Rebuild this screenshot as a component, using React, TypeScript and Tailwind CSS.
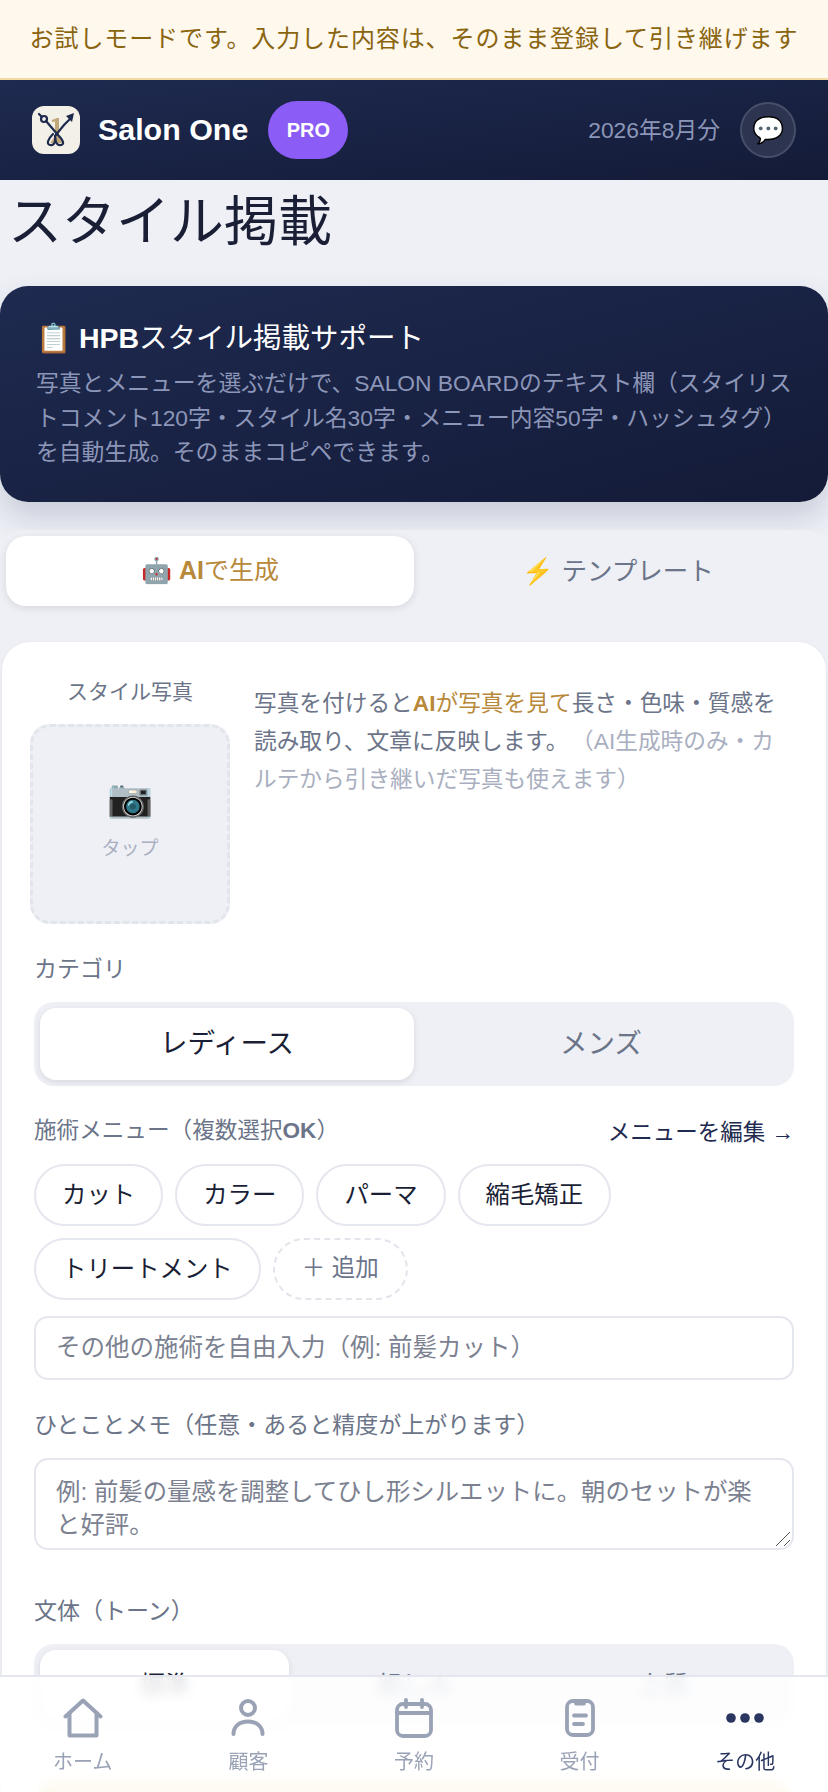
import React from 'react';

const font = { fontFamily: '"Liberation Sans", "Noto Sans CJK JP", sans-serif' };

function Logo() {
  return (
    <div className="w-[48px] h-[48px] rounded-[12px] bg-[#f3f1e7] flex items-center justify-center shrink-0">
      <svg width="40" height="40" viewBox="0 0 40 40" fill="none">
        <path d="M21 8 L16 10 L16 12 L19 11.5 L19 26 L14 33 L27 33 L23 26 L23 8 Z" fill="#c2a878" />
        <g stroke="#1e2b4f" strokeWidth="2.2" fill="none" strokeLinecap="round">
          <circle cx="8" cy="9" r="3" />
          <path d="M3 4 L6 7" />
          <path d="M10 11 L22 25" />
          <path d="M22 25 C27 30 29 34 25 35 C20 36 19 30 19 26 L28 15 L36 7" />
          <path d="M17 24 C12 29 10 34 14 35 C19 36 20 30 19 26" />
        </g>
        <path d="M30 6 L38 3 L36 12 Z" fill="#1e2b4f" />
      </svg>
    </div>
  );
}

function Chip({ label, dashed }: { label: string; dashed?: boolean }) {
  if (dashed) {
    return (
      <div className="h-[62px] px-[27px] rounded-full border-2 border-dashed border-[#e3e5ec] flex items-center text-[23.5px] text-[#6b7488]">
        {label}
      </div>
    );
  }
  return (
    <div className="h-[62px] px-[26px] rounded-full border-2 border-[#e5e7ee] flex items-center text-[24.4px] text-[#1a1f36]">
      {label}
    </div>
  );
}

function NavItem({ label, active, children }: { label: string; active?: boolean; children: React.ReactNode }) {
  return (
    <div className="flex flex-col items-center">
      <div className="h-[46px] flex items-center justify-center">{children}</div>
      <div className={active ? 'mt-[6px] text-[20px] text-[#2a3560]' : 'mt-[6px] text-[20px] text-[#9aa2b6]'}>{label}</div>
    </div>
  );
}

export default function App() {
  return (
    <div className="relative w-[828px] h-[1792px] overflow-hidden bg-[#eef0f6]" style={font}>
      <div className="h-[80px] bg-[#fff8ed] border-b-2 border-[#f3d9a4] flex items-center justify-center text-[24px] tracking-[0.9px] text-[#8a6510]">
        お試しモードです。入力した内容は、そのまま登録して引き継げます
      </div>

      <header className="h-[100px] bg-gradient-to-br from-[#1e2a50] to-[#141b38] pl-[32px] pr-[32px] flex items-center justify-between">
        <div className="flex items-center">
          <Logo />
          <div className="ml-[18px] text-[30.4px] font-bold text-white">Salon One</div>
          <div className="ml-[20px] w-[80px] h-[58px] rounded-full bg-[#8b5cf6] flex items-center justify-center text-[20px] font-bold text-white">
            PRO
          </div>
        </div>
        <div className="flex items-center">
          <div className="text-[22.8px] text-[#8c96b8]">2026年8月分</div>
          <div className="ml-[20px] w-[56px] h-[56px] rounded-full bg-[#2d3450] border-2 border-[#474e69] flex items-center justify-center text-[26px]">
            💬
          </div>
        </div>
      </header>

      <h1 className="pl-[8px] pt-[4px] h-[106px] text-[54px] leading-[76px] text-[#1a1f36]">スタイル掲載</h1>

      <section className="h-[216px] rounded-[28px] bg-gradient-to-br from-[#1e2a50] to-[#141b38] shadow-[0_16px_32px_rgba(30,42,80,0.18)] pl-[36px] pr-[28px] pt-[32px]">
        <div className="text-[28.5px] leading-[40px] text-white">
          📋 <b>HPB</b>スタイル掲載サポート
        </div>
        <p className="mt-[8px] text-[22.8px] leading-[34.5px] text-[#8c96b8]">
          写真とメニューを選ぶだけで、SALON BOARDのテキスト欄（スタイリストコメント120字・スタイル名30字・メニュー内容50字・ハッシュタグ）を自動生成。そのままコピペできます。
        </p>
      </section>

      <div className="mt-[28px] h-[100px] rounded-t-[24px] bg-[#eef0f5] p-[6px] grid grid-cols-2 items-start">
        <div className="h-[70px] rounded-[20px] bg-white shadow-[0_2px_8px_rgba(0,0,0,0.1)] flex items-center justify-center text-[25px] text-[#b8893a]">
          🤖&nbsp;<b>AI</b>で生成
        </div>
        <div className="h-[70px] flex items-center justify-center text-[25.5px] text-[#6b7488]">⚡ テンプレート</div>
      </div>

      <main className="mt-[12px] mx-[2px] rounded-[28px] bg-white shadow-[0_1px_4px_rgba(0,0,0,0.06)] px-[32px] pt-[32px]">
        <div className="flex">
          <div className="w-[200px] -ml-[4px] shrink-0">
            <div className="pt-[2px] h-[32px] text-center text-[21px] leading-[32px] text-[#6b7488]">スタイル写真</div>
            <div className="mt-[18px] h-[200px] pb-[10px] rounded-[20px] bg-[#eef0f5] border-[3px] border-dashed border-[#e3e5ec] flex flex-col items-center justify-center">
              <div className="text-[37px] leading-[48px]">📷</div>
              <div className="mt-[12px] text-[19px] text-[#a9afc0]">タップ</div>
            </div>
          </div>
          <p className="ml-[24px] mt-[10px] w-[526px] text-[22.7px] leading-[38px] text-[#6b7488]">
            写真を付けると<span className="text-[#b8893a]"><b>AI</b>が写真を見て</span>長さ・色味・質感を読み取り、文章に反映します。<span className="ml-[14px] text-[#a9afc0]">（AI生成時のみ・カルテから引き継いだ写真も使えます）</span>
          </p>
        </div>

        <div className="mt-[28px] text-[23px] leading-[34px] text-[#6b7488]">カテゴリ</div>
        <div className="mt-[16px] h-[84px] rounded-[20px] bg-[#eef0f5] p-[6px] grid grid-cols-2">
          <div className="rounded-[16px] bg-white shadow-[0_2px_6px_rgba(0,0,0,0.1)] flex items-center justify-center text-[27.5px] text-[#1a1f36]">
            レディース
          </div>
          <div className="flex items-center justify-center text-[27.5px] text-[#6b7488]">メンズ</div>
        </div>

        <div className="mt-[28px] flex items-start justify-between">
          <div className="text-[22.6px] leading-[34px] text-[#6b7488]">
            施術メニュー（複数選択<b>OK</b>）
          </div>
          <div className="pt-[2px] h-[34px] text-[22.5px] leading-[34px] text-[#1e2a50]">メニューを編集 →</div>
        </div>
        <div className="mt-[16px] flex flex-wrap gap-[12px] w-[700px]">
          <Chip label="カット" />
          <Chip label="カラー" />
          <Chip label="パーマ" />
          <Chip label="縮毛矯正" />
          <Chip label="トリートメント" />
          <Chip label="＋ 追加" dashed />
        </div>

        <div className="mt-[16px] h-[64px] rounded-[14px] border-2 border-[#e5e7ee] px-[20px] flex items-center text-[24.5px] text-[#7b8190]">
          その他の施術を自由入力（例: 前髪カット）
        </div>

        <div className="mt-[28px] text-[23px] leading-[34px] text-[#6b7488]">ひとことメモ（任意・あると精度が上がります）</div>
        <div className="relative mt-[16px] h-[92px] rounded-[14px] border-2 border-[#e5e7ee] px-[20px] pt-[15px] text-[24.4px] leading-[33px] text-[#7b8190]">
          例: 前髪の量感を調整してひし形シルエットに。朝のセットが楽と好評。
          <svg className="absolute right-[1px] bottom-[1px]" width="16" height="16" viewBox="0 0 16 16" stroke="#555" strokeWidth="1">
            <path d="M1 15 L15 1 M9 15 L15 9" />
          </svg>
        </div>

        <div className="mt-[44px] text-[23px] leading-[34px] text-[#6b7488]">文体（トーン）</div>
        <div className="mt-[16px] h-[84px] rounded-[20px] bg-[#eef0f5] p-[6px] grid grid-cols-3">
          <div className="rounded-[16px] bg-white shadow-[0_2px_6px_rgba(0,0,0,0.1)] flex items-center justify-center text-[25px] text-[#1a1f36]">
            標準
          </div>
          <div className="flex items-center justify-center text-[25px] text-[#6b7488]">親しみ</div>
          <div className="flex items-center justify-center text-[25px] text-[#6b7488]">上質</div>
        </div>

        <div className="mt-[52px] h-[80px] rounded-[24px] bg-[#f6dfa6]" />
      </main>

      <nav className="absolute left-0 right-0 bottom-0 h-[117px] bg-white/85 backdrop-blur-[6px] border-t-2 border-[#e5e7ee] grid grid-cols-5 pt-[18px]">
        <NavItem label="ホーム">
          <svg width="40" height="40" viewBox="0 0 40 40" fill="none" stroke="#9aa2b6" strokeWidth="4" strokeLinejoin="round" strokeLinecap="round">
            <path d="M2.5 18.5 L20 2.5 L37.5 18.5" />
            <path d="M6.5 15 V37.5 H33.5 V15" />
          </svg>
        </NavItem>
        <NavItem label="顧客">
          <svg width="34" height="38" viewBox="0 0 34 38" fill="none" stroke="#9aa2b6" strokeWidth="4" strokeLinecap="round">
            <circle cx="17" cy="9" r="7" />
            <path d="M2.5 35 C2.5 27 9 22.5 17 22.5 C25 22.5 31.5 27 31.5 35" />
          </svg>
        </NavItem>
        <NavItem label="予約">
          <svg width="38" height="40" viewBox="0 0 38 40" fill="none" stroke="#9aa2b6" strokeWidth="3.8" strokeLinecap="round">
            <rect x="2" y="6" width="34" height="32" rx="6" />
            <path d="M2 15 H36 M11 2 V9 M27 2 V9" />
          </svg>
        </NavItem>
        <NavItem label="受付">
          <svg width="30" height="38" viewBox="0 0 30 38" fill="none" stroke="#9aa2b6" strokeWidth="3.8" strokeLinecap="round">
            <rect x="2" y="2" width="26" height="34" rx="6" />
            <path d="M11 4.5 H19 M9 16.5 H21 M9 25 H18" />
          </svg>
        </NavItem>
        <NavItem label="その他" active>
          <svg width="38" height="12" viewBox="0 0 38 12" fill="#2a3560">
            <circle cx="5" cy="6" r="4.8" />
            <circle cx="19" cy="6" r="4.8" />
            <circle cx="33" cy="6" r="4.8" />
          </svg>
        </NavItem>
      </nav>
    </div>
  );
}
